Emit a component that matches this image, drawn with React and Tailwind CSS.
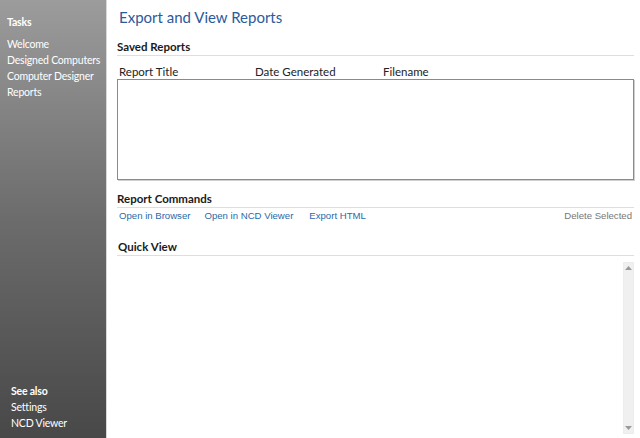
export default function App() {
  return (
    <div className="flex h-[438px] w-[640px] overflow-hidden bg-white font-['Lato',sans-serif] text-[11.5px]">
      <aside className="flex w-[106px] flex-col justify-between whitespace-nowrap bg-gradient-to-b from-[#9c9c9c] via-[#6c6c6c] to-[#484848] pb-[7px] text-[10.5px] tracking-[-0.2px] text-white">
        <div className="pl-[7px] pt-[14px]">
          <div className="mb-[6px] font-bold leading-[16px]">Tasks</div>
          <div className="leading-[16px]">Welcome</div>
          <div className="leading-[16px]">Designed Computers</div>
          <div className="leading-[16px]">Computer Designer</div>
          <div className="leading-[16px]">Reports</div>
        </div>
        <div className="pl-[11px]">
          <div className="font-bold leading-[16px]">See also</div>
          <div className="leading-[16px]">Settings</div>
          <div className="leading-[16px]">NCD Viewer</div>
        </div>
      </aside>
      <main className="flex flex-1 flex-col border-l border-[#d8d8d8] pl-[10px] pr-[6px]">
        <h1 className="pl-[2px] pt-[6px] text-[15px] leading-[22px] text-[#2b5a9c]">Export and View Reports</h1>
        <div className="mt-[11px] border-b border-[#dedede] font-bold leading-[16px] text-[#1a1a1a]">Saved Reports</div>
        <div className="mt-[9px] flex pl-[2px] leading-[14px] text-[#222]">
          <span className="w-[136px]">Report Title</span>
          <span className="w-[128px]">Date Generated</span>
          <span>Filename</span>
        </div>
        <div className="h-[101px] border border-[#8a8a8a] bg-white shadow-[1px_1px_0_#d0d0d0]" />
        <div className="mt-[11px] border-b border-[#dedede] font-bold leading-[16px] text-[#1a1a1a]">Report Commands</div>
        <div className="mt-[1px] flex pr-[2px] font-['Liberation_Sans',sans-serif] text-[9.6px] leading-[14px]">
          <span className="ml-[2px] text-[#2a6aa8]">Open in Browser</span>
          <span className="ml-[14px] text-[#2a6aa8]">Open in NCD Viewer</span>
          <span className="ml-[16px] text-[#2a6aa8]">Export HTML</span>
          <span className="ml-auto text-[#777]">Delete Selected</span>
        </div>
        <div className="mt-[16px] border-b border-[#dedede] pl-[1px] font-bold leading-[16px] text-[#1a1a1a]">Quick View</div>
        <div className="flex flex-1 justify-end pt-[6px] pb-[4px]">
          <div className="flex w-[11px] flex-col items-center justify-between border border-[#ececec] bg-[#f0f0f0] py-[3px]">
            <svg width="7" height="4" viewBox="0 0 7 4"><path d="M0 4L3.5 0L7 4Z" fill="#9a9a9a" /></svg>
            <svg width="7" height="4" viewBox="0 0 7 4"><path d="M0 0L3.5 4L7 0Z" fill="#9a9a9a" /></svg>
          </div>
        </div>
      </main>
    </div>
  )
}
